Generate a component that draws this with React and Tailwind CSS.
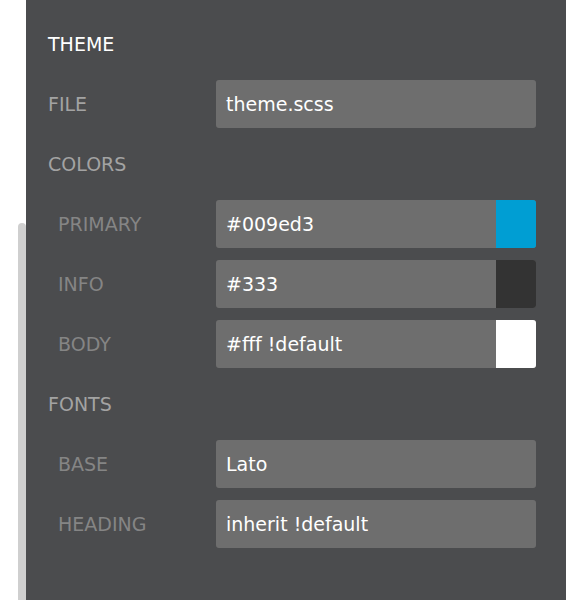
import React from 'react';

const rows = [
  { label: 'THEME', kind: 'title' },
  { label: 'FILE', kind: 'section', value: 'theme.scss' },
  { label: 'COLORS', kind: 'section' },
  { label: 'PRIMARY', kind: 'sub', value: '#009ed3', swatch: 'bg-[#009ed3]' },
  { label: 'INFO', kind: 'sub', value: '#333', swatch: 'bg-[#333333]' },
  { label: 'BODY', kind: 'sub', value: '#fff !default', swatch: 'bg-white' },
  { label: 'FONTS', kind: 'section' },
  { label: 'BASE', kind: 'sub', value: 'Lato' },
  { label: 'HEADING', kind: 'sub', value: 'inherit !default' },
];

const labelClass = {
  title: 'text-white',
  section: 'text-[#a3a3a3]',
  sub: 'text-[#858585] pl-[10px]',
};

const Row = ({ row }) => (
  <div className="flex items-center h-12">
    <div className={`w-[168px] ${labelClass[row.kind]}`}>{row.label}</div>
    {row.value !== undefined && (
      <div className="flex w-[320px] h-12 rounded-[3px] overflow-hidden bg-[#6e6e6e]">
        <div className="flex-1 flex items-center pl-[10px] text-white">{row.value}</div>
        {row.swatch && <div className={`w-10 h-12 ${row.swatch}`}></div>}
      </div>
    )}
  </div>
);

const App = () => {
  return (
    <div
      className="flex w-[566px] h-[600px] bg-white overflow-hidden text-[19px] leading-none"
      style={{ fontFamily: '"DejaVu Sans", Verdana, sans-serif' }}
    >
      {/* scroll track */}
      <div className="w-[26px] h-full flex flex-col">
        <div className="mt-[223px] ml-[18px] w-2 flex-1 bg-[#cfcfcf] rounded-t-[4px]"></div>
      </div>

      {/* settings panel */}
      <div className="flex-1 h-full bg-[#4b4c4e] pt-5 pl-[22px] flex flex-col gap-3">
        {rows.map((row) => (
          <Row key={row.label} row={row} />
        ))}
      </div>
    </div>
  );
};

export default App;
